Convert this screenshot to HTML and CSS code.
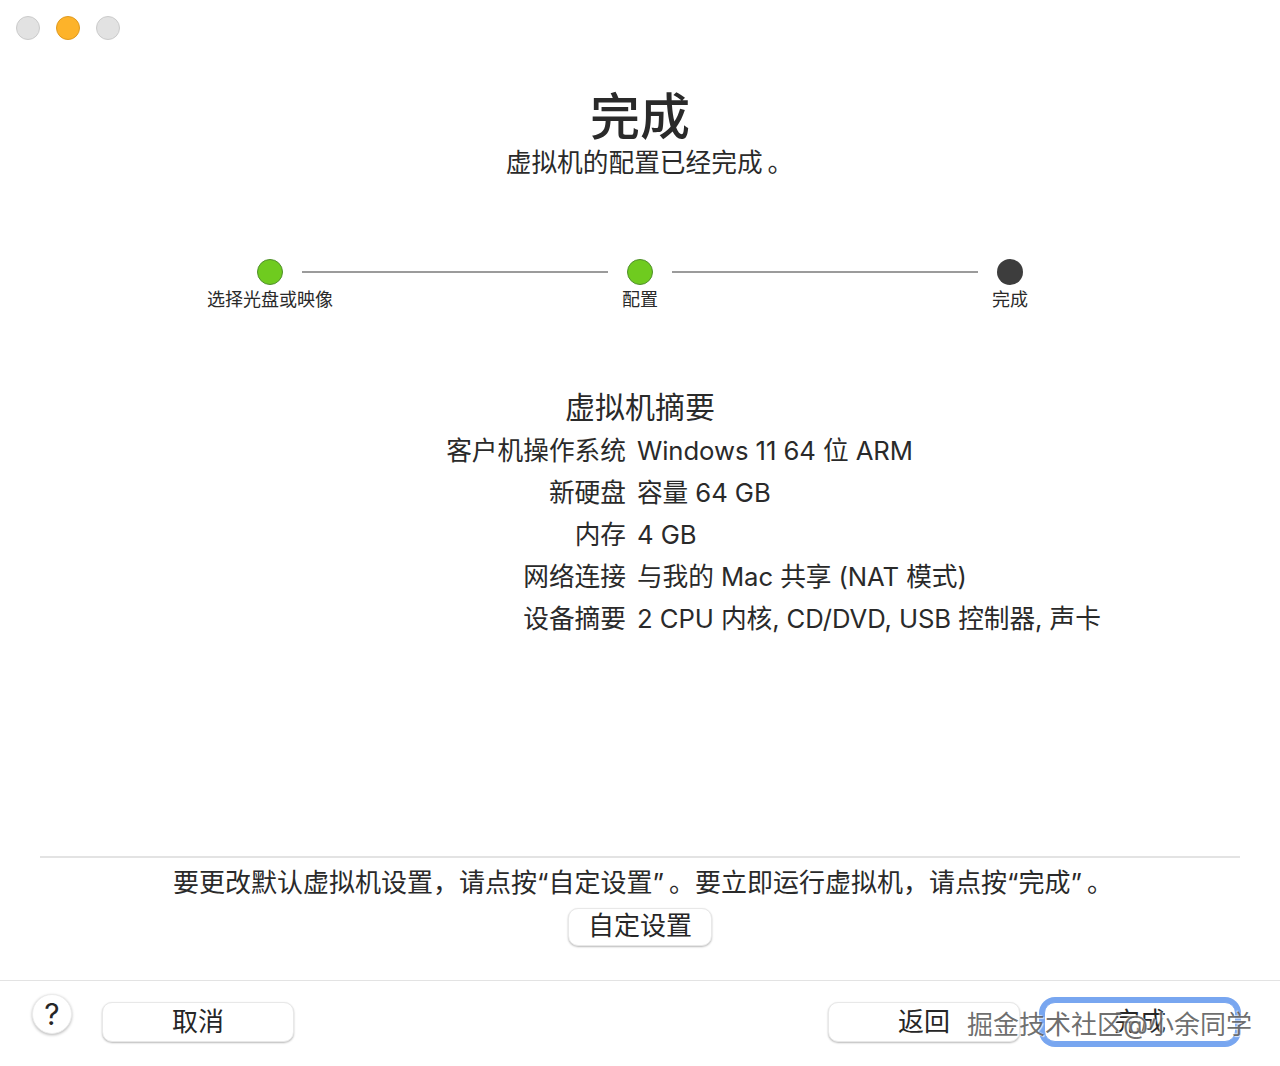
FILE: index.html
```html
<!DOCTYPE html>
<html lang="zh-CN">
<head>
<meta charset="utf-8">
<title>完成</title>
<link rel="stylesheet" href="styles.css">
</head>
<body>
<div class="window">
  <div class="lights">
    <span class="light"></span>
    <span class="light light-min"></span>
    <span class="light"></span>
  </div>
  <header class="head">
    <h1 class="title">完成</h1>
    <p class="subtitle">虚拟机的配置已经完成<span class="stop">。</span></p>
  </header>
  <div class="steps">
    <div class="step"><span class="dot dot-done"></span><span class="step-label">选择光盘或映像</span></div>
    <span class="line"></span>
    <div class="step"><span class="dot dot-done"></span><span class="step-label">配置</span></div>
    <span class="line"></span>
    <div class="step"><span class="dot dot-current"></span><span class="step-label">完成</span></div>
  </div>
  <section class="summary">
    <h2 class="summary-title">虚拟机摘要</h2>
    <dl class="rows">
      <dt>客户机操作系统</dt><dd>Windows 11 64 位 ARM</dd>
      <dt>新硬盘</dt><dd>容量 64 GB</dd>
      <dt>内存</dt><dd>4 GB</dd>
      <dt>网络连接</dt><dd>与我的 Mac 共享 (NAT 模式)</dd>
      <dt>设备摘要</dt><dd>2 CPU 内核, CD/DVD, USB 控制器, 声卡</dd>
    </dl>
  </section>
  <section class="note">
    <p class="note-text">要更改默认虚拟机设置，请点按“自定设置”<span class="stop">。</span>要立即运行虚拟机，请点按“完成”<span class="stop">。</span></p>
    <button class="btn btn-custom">自定设置</button>
  </section>
  <footer class="foot">
    <button class="help">?</button>
    <button class="btn btn-foot">取消</button>
    <span class="spacer"></span>
    <button class="btn btn-foot">返回</button>
    <button class="btn btn-foot btn-primary">完成</button>
  </footer>
  <div class="watermark">掘金技术社区@小余同学</div>
</div>
</body>
</html>
```
FILE: styles.css
```css
* { box-sizing: border-box; }
html, body { margin: 0; padding: 0; background: #fff; }
body {
  font-family: "Inter", "Noto Sans CJK SC", sans-serif;
  color: #2a2a2a;
}
.window {
  position: relative;
  width: 1280px;
  height: 1066px;
  overflow: hidden;
  background: #fff;
}
.lights { display: flex; gap: 16px; padding: 16px 0 0 16px; height: 40px; }
.light {
  width: 24px; height: 24px; border-radius: 50%;
  background: #e2e2e2; border: 1px solid #cbcbcb;
}
.light-min { background: #fdb32a; border-color: #e09a1f; }
.head { text-align: center; padding-top: 44px; height: 219px; }
.title { margin: 0; font-size: 50px; line-height: 66px; font-weight: 500; color: #2a2a2a; }
.subtitle { margin: -1px 0 0; padding-left: 19px; font-size: 25.7px; line-height: 28px; font-weight: 400; }
.stop { margin-left: 5px; }
.steps {
  display: grid;
  grid-template-columns: 64px 306px 64px 306px 64px;
  justify-content: center;
  height: 125px;
}
.step { display: flex; flex-direction: column; align-items: center; width: 64px; }
.dot { width: 26px; height: 26px; border-radius: 50%; }
.dot-done { background: #6fcb1f; border: 1px solid #4f8f2a; }
.dot-current { background: #3d3d3d; }
.step-label { font-size: 18px; line-height: 24px; margin-top: 3px; white-space: nowrap; }
.line { height: 2px; margin-top: 12px; background: #9b9b9b; }
.summary { height: 472px; }
.summary-title { margin: 0; text-align: center; font-size: 30px; line-height: 46px; font-weight: 400; }
.rows {
  margin: 0;
  display: grid;
  grid-template-columns: 626px 1fr;
  column-gap: 11px;
  grid-auto-rows: 42px;
  font-size: 25.7px;
  line-height: 42px;
}
.rows dt { text-align: right; }
.rows dd { margin: 0; white-space: nowrap; letter-spacing: -0.08px; }
.note {
  margin: 0 40px;
  height: 125px;
  border-top: 2px solid #e3e3e3;
  display: flex;
  flex-direction: column;
  align-items: center;
}
.note-text { margin: 6px 0 0; padding-left: 6px; font-size: 26px; line-height: 38px; white-space: nowrap; }
.btn {
  font-family: inherit;
  color: #262626;
  background: #fff;
  border: 1px solid #e8e8e8;
  border-radius: 10px;
  box-shadow: 0 1px 2px rgba(0, 0, 0, .28);
  padding: 0;
  font-size: 26px;
}
.btn-custom { width: 144px; height: 38px; margin-top: 6px; padding-bottom: 2px; line-height: 32px; }
.foot {
  display: flex;
  align-items: flex-start;
  height: 85px;
  padding: 13px 40px 0 32px;
  border-top: 1px solid #e3e3e3;
  margin-top: -1px;
}
.help {
  width: 40px; height: 40px; border-radius: 50%;
  background: #fff; border: 1px solid #ececec;
  box-shadow: 0 1px 3px rgba(0, 0, 0, .28);
  font-family: inherit; font-size: 30px; font-weight: 400; color: #262626;
  padding: 0; line-height: 36px;
}
.btn-foot { width: 192px; height: 40px; line-height: 36px; margin-top: 8px; }
.help + .btn-foot { margin-left: 30px; }
.spacer { flex: 1; }
.btn-primary {
  margin-left: 24px;
  margin-right: 4px;
  border-radius: 11px;
  box-shadow: 0 0 0 5px #78a6f0;
  border-color: #78a6f0;
}
.watermark {
  position: absolute;
  left: 967px;
  top: 1006px;
  font-size: 26px;
  line-height: 38px;
  white-space: nowrap;
  color: rgba(85, 85, 85, .85);
  text-shadow: 1px 1px 1px rgba(255, 255, 255, .8), -1px -1px 1px rgba(255, 255, 255, .6);
}
```
